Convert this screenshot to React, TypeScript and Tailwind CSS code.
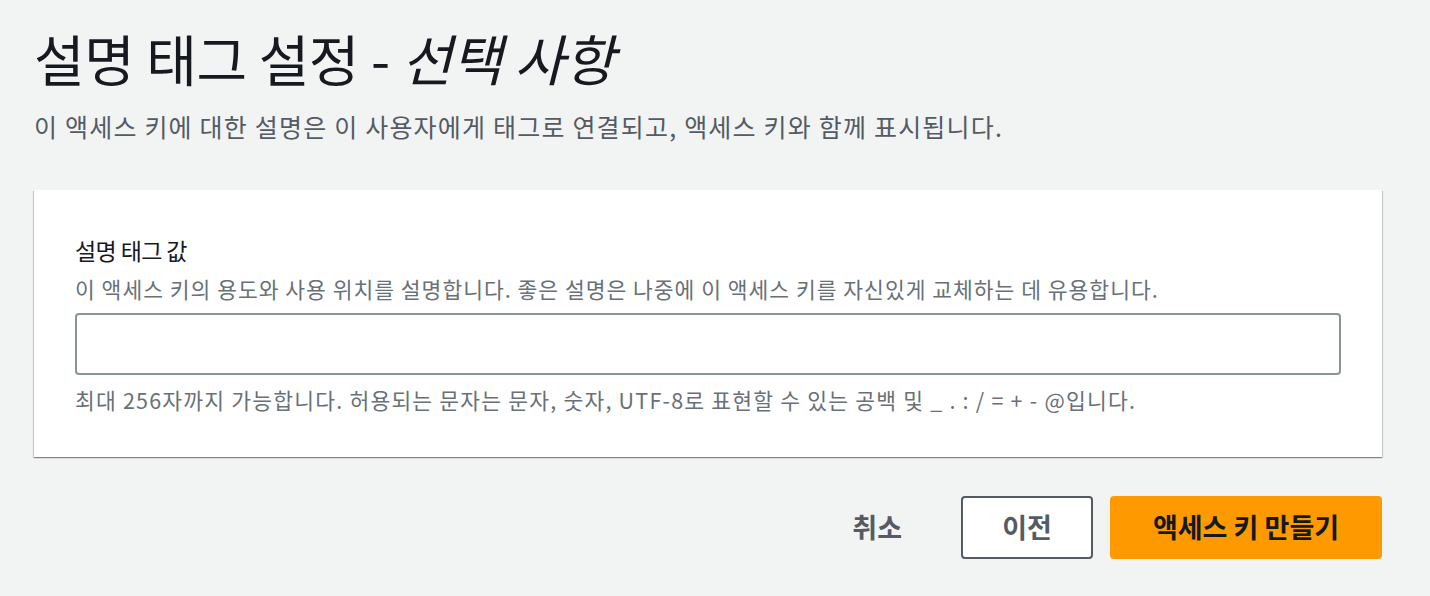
import React from 'react';

const font = { fontFamily: '"Noto Sans CJK KR", "Noto Sans", sans-serif' };

const App = () => {
  return (
    // Page: light gray AWS console background
    <div className="min-h-[596px] w-full bg-[#f2f3f3] pl-[34px] pr-[48px] pt-[22px] text-[#16191f]" style={font}>
      {/* Header */}
      <h1 className="text-[55px] leading-[70px] font-normal tracking-[-0.4px]">
        설명 태그 설정 - <span className="italic">선택 사항</span>
      </h1>
      <p className="mt-[18px] text-[25px] leading-[32px] tracking-[1.2px] text-[#545b64]">
        이 액세스 키에 대한 설명은 이 사용자에게 태그로 연결되고, 액세스 키와 함께 표시됩니다.
      </p>

      {/* Card */}
      <div className="mt-[48px] bg-white px-[41px] pt-[44px] pb-[43px] shadow-[0_1px_1px_0_rgba(0,28,36,0.3),1px_1px_1px_0_rgba(0,28,36,0.15),-1px_1px_1px_0_rgba(0,28,36,0.15)]">
        <label className="block text-[23px] leading-[32px] font-normal tracking-[-0.6px]">설명 태그 값</label>
        <p className="mt-[9px] text-[21.5px] leading-[28px] tracking-[1px] text-[#687078]">
          이 액세스 키의 용도와 사용 위치를 설명합니다. 좋은 설명은 나중에 이 액세스 키를 자신있게 교체하는 데 유용합니다.
        </p>
        <input
          type="text"
          className="mt-[10px] block h-[62px] w-full rounded-[4px] border-2 border-[#879596] bg-white px-4 text-[20px] outline-none"
        />
        <p className="mt-[11px] text-[21.5px] leading-[28px] tracking-[1.2px] text-[#687078]">
          최대 256자까지 가능합니다. 허용되는 문자는 문자, 숫자, UTF-8로 표현할 수 있는 공백 및 _ . : / = + - @입니다.
        </p>
      </div>

      {/* Actions */}
      <div className="mt-[39px] flex items-center justify-end">
        <button className="px-[20px] text-[27px] font-bold text-[#545b64]">취소</button>
        <button className="ml-[39px] h-[63px] w-[132px] rounded-[4px] border-2 border-[#545b64] bg-white text-[27px] font-bold text-[#545b64]">
          이전
        </button>
        <button className="ml-[17px] h-[63px] w-[272px] rounded-[4px] bg-[#ff9900] text-[27px] font-bold text-[#16191f]">
          액세스 키 만들기
        </button>
      </div>
    </div>
  );
};

export default App;
